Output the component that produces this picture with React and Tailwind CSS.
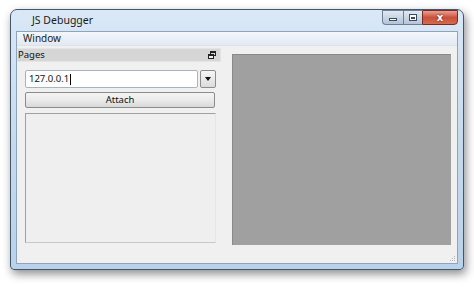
const UI_FONT = "font-['Noto_Sans','Liberation_Sans',sans-serif]"

function CaptionButtons() {
  return (
    <div className="flex h-[15px] self-start">
      <div className="w-[21px] h-full border border-[#6d7f96] border-r-0 rounded-bl-[4px] bg-gradient-to-b from-[#e1e8f1] to-[#b4c4d8] flex items-center justify-center">
        <div className="w-[8px] h-[3px] border border-[#3c4c60] bg-white mt-[3px]" />
      </div>
      <div className="w-[19px] h-full border border-[#6d7f96] border-r-0 bg-gradient-to-b from-[#e1e8f1] to-[#b4c4d8] flex items-center justify-center">
        <div className="w-[8px] h-[7px] border border-[#3c4c60] bg-white flex items-center justify-center">
          <div className="w-[4px] h-[2px] border border-[#3c4c60]" />
        </div>
      </div>
      <div className="w-[36px] h-full border border-[#7a2a22] rounded-br-[4px] bg-gradient-to-b from-[#e8a092] via-[#c9503b] to-[#d46b4f] flex items-center justify-center">
        <span className="text-white font-bold text-[10px] leading-none font-['DejaVu_Sans',sans-serif] [text-shadow:0_0_2px_#5a1a10]">x</span>
      </div>
    </div>
  )
}

function FloatIcon() {
  return (
    <svg width="8" height="8" viewBox="0 0 8 8">
      <rect x="2.5" y="0.5" width="5" height="4" fill="none" stroke="#222" />
      <rect x="2.5" y="0.5" width="5" height="1.5" fill="#222" />
      <rect x="0.5" y="3.5" width="5" height="4" fill="#f0f0f0" stroke="#222" />
      <rect x="0.5" y="3.5" width="5" height="1.5" fill="#222" />
    </svg>
  )
}

export default function App() {
  return (
    <div className={`w-[474px] h-[287px] bg-white overflow-hidden pt-[9px] pl-[10px] ${UI_FONT}`}>
      {/* window frame */}
      <div className="w-[454px] h-[261px] rounded-t-[7px] rounded-b-[4px] border border-[#44566c] bg-gradient-to-b from-[#dae8f6] via-[#c6daee] to-[#b9d2ea] shadow-[2px_4px_10px_rgba(0,0,0,0.45)] flex flex-col">
        {/* title bar */}
        <div className="h-[21px] flex items-start justify-between pr-[5px]">
          <div className="pl-[21px] pt-[5px] text-[10.5px] leading-none text-[#1a1a1a]">JS Debugger</div>
          <CaptionButtons />
        </div>
        {/* client */}
        <div className="mx-[5px] mb-[5px] flex-1 bg-[#f0f0f0] border border-[#8ea4bc] flex flex-col relative">
          <div className="h-[14px] bg-gradient-to-b from-[#f3f6fb] to-[#e3e9f3] border-b border-[#dde3ec] text-[10px] leading-[13px] pl-[6px] text-[#1a1a1a]">
            Window
          </div>
          <div className="flex pt-[2px]">
            {/* Pages dock */}
            <div className="w-[204px] flex flex-col">
              <div className="h-[14px] bg-[#d6d6d6] border border-[#e4e4e4] flex items-center justify-between pr-[4px]">
                <span className="text-[9.5px] leading-none text-[#111]">Pages</span>
                <FloatIcon />
              </div>
              <div className="pl-[8px] pt-[8px] flex flex-col">
                <div className="flex gap-[2px] h-[18px]">
                  <div className="w-[173px] h-full bg-white border border-[#a7b3c2] rounded-[2px] flex items-center pl-[3px] text-[9.5px] text-[#111]">
                    127.0.0.1<span className="inline-block w-px h-[11px] bg-black ml-px" />
                  </div>
                  <div className="w-[16px] h-full rounded-[2px] border border-[#8c8c8c] bg-gradient-to-b from-[#f6f6f6] to-[#dcdcdc] flex items-center justify-center">
                    <svg width="6" height="4" viewBox="0 0 6 4"><path d="M0 0H6L3 4Z" fill="#111" /></svg>
                  </div>
                </div>
                <div className="mt-[4px] w-[190px] h-[16px] rounded-[2px] border border-[#8c8c8c] bg-gradient-to-b from-[#f4f4f4] via-[#ebebeb] to-[#d8d8d8] flex items-center justify-center text-[9.5px] text-[#111]">
                  Attach
                </div>
                <div className="mt-[5px] w-[191px] h-[130px] border border-[#a0a0a0] border-r-[#e6e6e6] border-b-[#c8c8c8] bg-[#efefef]" />
              </div>
            </div>
            {/* central area */}
            <div className="ml-[11px] mt-[6px] w-[219px] h-[191px] bg-[#a0a0a0] border-t border-l border-[#8a8a8a]" />
          </div>
          {/* size grip */}
          <svg className="absolute right-[1px] bottom-[1px]" width="8" height="8" viewBox="0 0 8 8">
            <g fill="#b8b8b8">
              <rect x="6" y="2" width="1" height="1" />
              <rect x="4" y="4" width="1" height="1" />
              <rect x="6" y="4" width="1" height="1" />
              <rect x="2" y="6" width="1" height="1" />
              <rect x="4" y="6" width="1" height="1" />
              <rect x="6" y="6" width="1" height="1" />
            </g>
          </svg>
        </div>
      </div>
    </div>
  )
}
